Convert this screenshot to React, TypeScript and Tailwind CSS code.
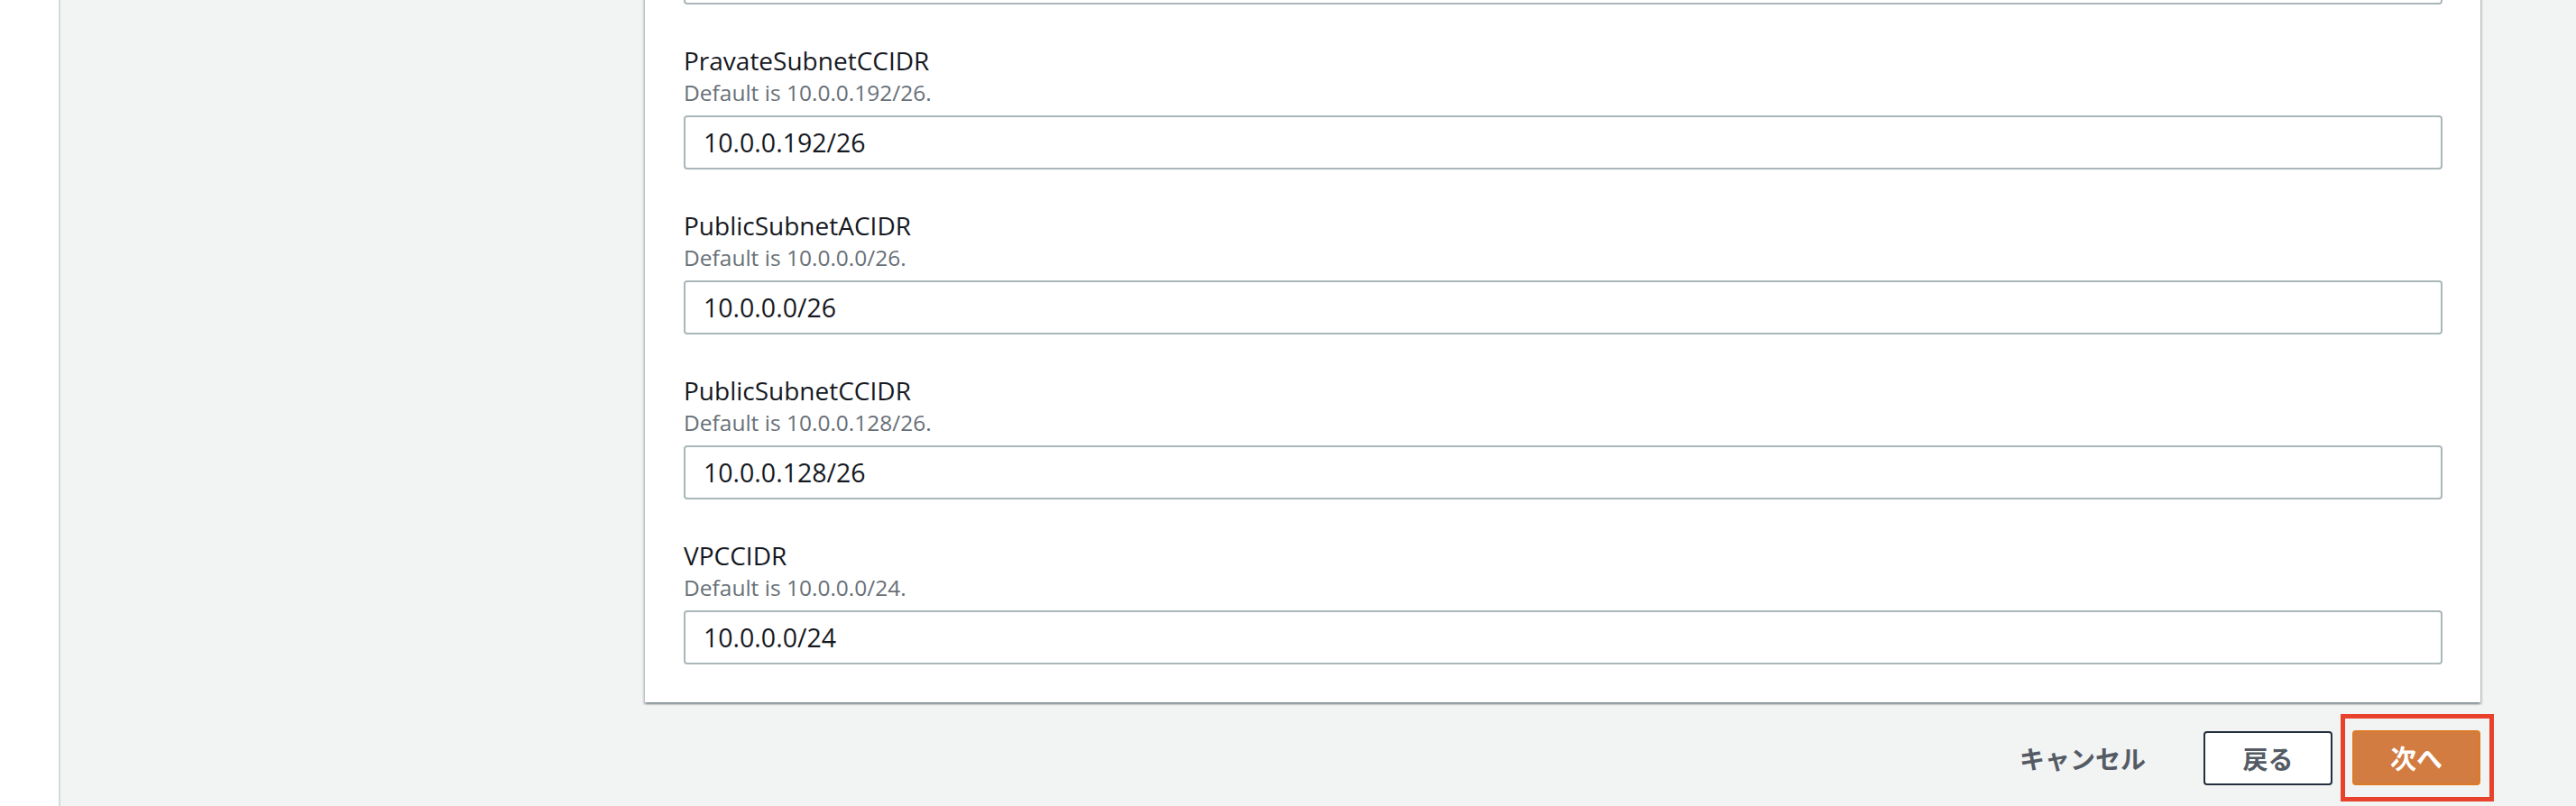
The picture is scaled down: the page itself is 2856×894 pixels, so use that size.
import React from "react";

type Field = { name: string; def: string; value: string };

const fields: Field[] = [
  { name: "PravateSubnetCCIDR", def: "10.0.0.192/26", value: "10.0.0.192/26" },
  { name: "PublicSubnetACIDR", def: "10.0.0.0/26", value: "10.0.0.0/26" },
  { name: "PublicSubnetCCIDR", def: "10.0.0.128/26", value: "10.0.0.128/26" },
  { name: "VPCCIDR", def: "10.0.0.0/24", value: "10.0.0.0/24" },
];

function TextInput({ value }: { value: string }) {
  return (
    <input
      readOnly
      defaultValue={value}
      className="block h-[60px] w-full rounded-[4px] border-2 border-[#aab7b8] bg-white px-[20px] text-[28.5px] text-[#16191f] outline-none font-['Open_Sans',sans-serif]"
    />
  );
}

function FieldBlock({ f }: { f: Field }) {
  return (
    <div className="mt-[42px] flex flex-col">
      <div className="h-[40px] text-[28px] leading-[40px] text-[#16191f]">{f.name}</div>
      <div className="h-[32px] text-[24.5px] leading-[32px] text-[#687078]">Default is {f.def}.</div>
      <div className="mt-[9px]">
        <TextInput value={f.value} />
      </div>
    </div>
  );
}

export default function App() {
  return (
    <div className="flex h-[894px] w-full overflow-hidden bg-[#f2f3f3] font-['Open_Sans',sans-serif]">
      <div className="w-[67px] shrink-0 border-r-2 border-[#d5dbdb] bg-white" />
      <main className="flex min-w-0 flex-1 flex-col pl-[648px] pr-[106px]">
        <div className="-mt-[55px] bg-white pb-[42px] pl-[43px] pr-[42px] shadow-[0_2px_2px_0_rgba(0,28,36,0.3),2px_2px_2px_0_rgba(0,28,36,0.15),-2px_2px_2px_0_rgba(0,28,36,0.15)]">
          <TextInput value="10.0.0.64/26" />
          {fields.map((f) => (
            <FieldBlock key={f.name} f={f} />
          ))}
        </div>
        <div className="mt-[31px] flex items-center justify-end font-['Noto_Sans_CJK_JP',sans-serif]">
          <button className="mr-[64px] h-[60px] text-[28px] font-bold text-[#545b64]">キャンセル</button>
          <button className="h-[60px] w-[143px] rounded-[4px] border-2 border-[#232f3e] bg-white text-[28px] font-bold text-[#545b64]">
            戻る
          </button>
          <div className="relative ml-[22px]">
            <button className="h-[61px] w-[142px] rounded-[4px] border-2 border-[#dd7a26] bg-[#d27c41] text-[29px] font-bold text-white">
              次へ
            </button>
            <div className="pointer-events-none absolute -bottom-[18px] -left-[13px] -right-[15px] -top-[18px] border-[5px] border-[#e8422d]" />
          </div>
        </div>
      </main>
    </div>
  );
}
